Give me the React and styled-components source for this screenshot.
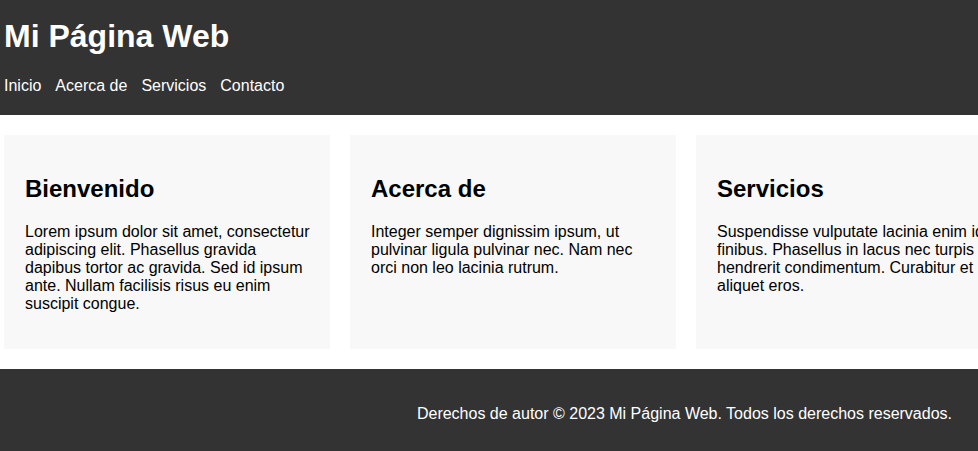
import React from 'react';
import styled, { createGlobalStyle } from 'styled-components';

const cards = [
  {
    title: 'Bienvenido',
    text: 'Lorem ipsum dolor sit amet, consectetur adipiscing elit. Phasellus gravida dapibus tortor ac gravida. Sed id ipsum ante. Nullam facilisis risus eu enim suscipit congue.',
  },
  {
    title: 'Acerca de',
    text: 'Integer semper dignissim ipsum, ut pulvinar ligula pulvinar nec. Nam nec orci non leo lacinia rutrum.',
  },
  {
    title: 'Servicios',
    text: 'Suspendisse vulputate lacinia enim id finibus. Phasellus in lacus nec turpis hendrerit condimentum. Curabitur et aliquet eros.',
  },
];

const links = ['Inicio', 'Acerca de', 'Servicios', 'Contacto'];

const App = () => {
  return (
    <>
      <GlobalStyle />
      <Header>
        <Title>Mi Página Web</Title>
        <Nav>
          {links.map((link) => (
            <NavLink key={link} href="#">{link}</NavLink>
          ))}
        </Nav>
      </Header>
      <Main>
        {cards.map((card) => (
          <Card key={card.title}>
            <CardTitle>{card.title}</CardTitle>
            <CardText>{card.text}</CardText>
          </Card>
        ))}
      </Main>
      <Footer>
        <FooterText>Derechos de autor © 2023 Mi Página Web. Todos los derechos reservados.</FooterText>
      </Footer>
    </>
  );
};

export default App;

const GlobalStyle = createGlobalStyle`
  body {
    margin: 0;
    font-family: "Liberation Sans", Arial, sans-serif;
    background: #fff;
    color: #000;
    overflow: hidden;
  }
`;

const Header = styled.header`
  background-color: #333;
  color: #fff;
  padding: 18px 4px 20px;
`;

const Title = styled.h1`
  font-size: 32px;
  font-weight: bold;
  margin: 0 0 22px;
`;

const Nav = styled.nav`
  display: flex;
  gap: 14px;
  font-size: 16px;
`;

const NavLink = styled.a`
  color: #fff;
  text-decoration: none;
`;

const Main = styled.main`
  display: flex;
  gap: 20px;
  padding: 20px 4px;
  overflow: hidden;
`;

const Card = styled.section`
  flex: 0 0 326px;
  box-sizing: border-box;
  background-color: #f8f8f8;
  padding: 20px 18px 20px 21px;
`;

const CardTitle = styled.h2`
  font-size: 24px;
  font-weight: bold;
  margin: 20px 0;
`;

const CardText = styled.p`
  font-size: 16px;
  margin: 16px 0;
`;

const Footer = styled.footer`
  background-color: #333;
  color: #fff;
  padding: 20px 26px 28px;
  text-align: right;
`;

const FooterText = styled.p`
  font-size: 16px;
  margin: 16px 0;
`;
